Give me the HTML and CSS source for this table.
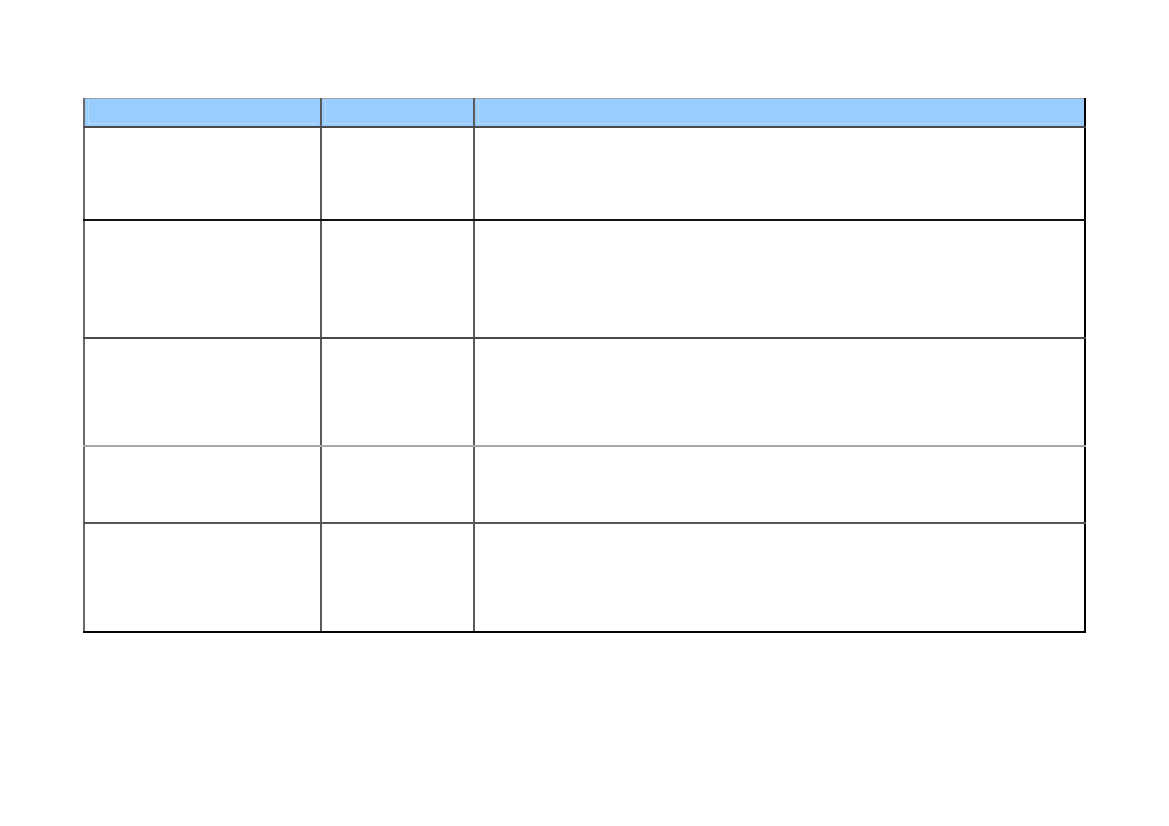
FILE: index.html
```html
<!DOCTYPE html>
<html>
<head>
<meta charset="utf-8">
<link rel="stylesheet" href="styles.css">
<title>Table</title>
</head>
<body>
<div class="page">
  <table class="grid">
    <colgroup>
      <col class="c1">
      <col class="c2">
      <col class="c3">
    </colgroup>
    <thead>
      <tr class="head">
        <th><div class="inset"></div></th>
        <th><div class="inset"></div></th>
        <th><div class="inset"></div></th>
      </tr>
    </thead>
    <tbody>
      <tr class="r1"><td></td><td></td><td></td></tr>
      <tr class="r2"><td></td><td></td><td></td></tr>
      <tr class="r3"><td></td><td></td><td></td></tr>
      <tr class="r4"><td></td><td></td><td></td></tr>
      <tr class="r5"><td></td><td></td><td></td></tr>
    </tbody>
  </table>
</div>
</body>
</html>
```

FILE: styles.css
```css
html, body {
  margin: 0;
  padding: 0;
  background: #ffffff;
  font-family: "Liberation Sans", Arial, sans-serif;
}

.page {
  padding: 98px 0 0 83px;
}

.grid {
  border-collapse: collapse;
  table-layout: fixed;
  width: 1001px;
  border-left: 2px solid #6a6a6a;
  border-right: 2px solid #000000;
}

.c1 { width: 237px; }
.c2 { width: 153px; }
.c3 { width: 611px; }

.grid th,
.grid td {
  padding: 0;
  border-left: 2px solid #5a5a5a;
  box-sizing: border-box;
}

.grid th:first-child,
.grid td:first-child {
  border-left: none;
}

.head th {
  background: #99ccff;
  height: 28px;
  border-top: 1px solid #a0a0a0;
  border-bottom: 2px solid #4a4a4a;
  vertical-align: top;
}

.inset {
  height: 23px;
  margin: 1px 3px 0 3px;
  border-left: 1px solid #b3d9ff;
  border-bottom: 1px solid #b3d9ff;
}

.r1 td { height: 93px; border-bottom: 2px solid #111111; }
.r2 td { height: 118px; border-bottom: 2px solid #4a4a4a; }
.r3 td { height: 108px; border-bottom: 2px solid #a8a8a8; }
.r4 td { height: 77px; border-bottom: 2px solid #555555; }
.r5 td { height: 109px; border-bottom: 2px solid #000000; }
```
